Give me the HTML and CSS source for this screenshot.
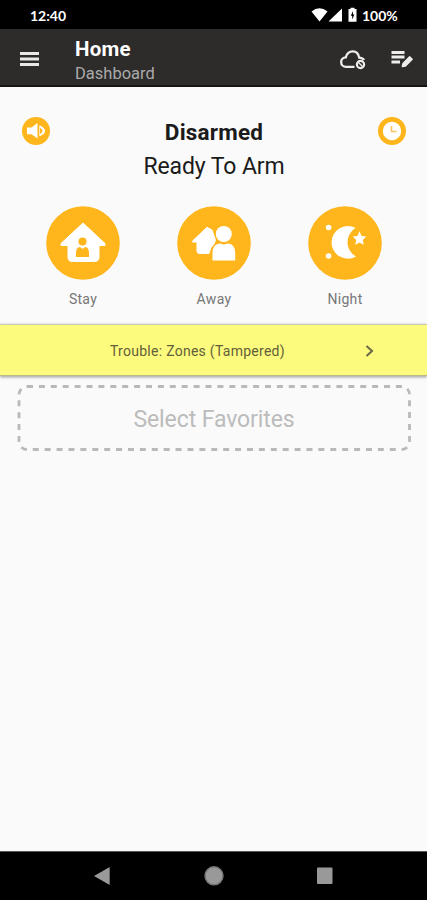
FILE: index.html
```html
<!DOCTYPE html>
<html lang="en">
<head>
    <meta charset="utf-8">
    <meta name="viewport" content="width=device-width, initial-scale=1">
    <title>Home</title>
    <link rel="stylesheet" href="styles.css">
</head>
<body>
    <div class="status-bar">
        <span class="time">12:40</span>
        <div class="status-icons">
            <svg width="52" height="16" viewBox="0 0 52 16" fill="#fff">
                <path d="M0.5 4.5Q8.5-1.8 16.5 4.5L8.5 14.5z"/>
                <path d="M31 1.5V14.5H17.5z"/>
                <path d="M39.5 2H37.5V14.8H45.5V2H43.5V0.8H39.5z"/>
                <path d="M42 4L39.8 8.8H41.2V12.5L43.4 7.6H42z" fill="#000"/>
            </svg>
            <span class="battery">100%</span>
        </div>
    </div>

    <header class="header">
        <svg class="menu" width="20" height="16" viewBox="0 0 20 16" stroke="#e8e8e8" stroke-width="2.8">
            <path d="M0 2.5H19M0 8H19M0 13.5H19"/>
        </svg>
        <div class="titles">
            <h1>Home</h1>
            <p>Dashboard</p>
        </div>
        <svg class="cloud" width="26" height="20" viewBox="0 0 26 20" fill="none" stroke="#eee" stroke-width="2.3">
            <path d="M14.5 16.8H6A4.7 4.7 0 0 1 5.8 7.3C8-0.4 17.6-0.8 19.2 7.6C21.5 7.8 23.2 8.6 24 10"/>
            <circle cx="20.5" cy="14.5" r="3.6" stroke-width="2.2"/>
            <path d="M18.3 12.3L22.7 16.7" stroke-width="1.4"/>
        </svg>
        <svg class="edit" width="23" height="18" viewBox="0 0 23 18" fill="none" stroke="#eee">
            <path d="M0.5 2.5H13.5M0.5 7H13.5M0.5 12H9" stroke-width="2.8"/>
            <path d="M11.3 16.5L12 13.4L18.6 6.8L21.2 9.3L14.5 16z" fill="#eee" stroke-width="1.3" stroke-linejoin="round"/>
        </svg>
    </header>

    <main>
        <section class="state">
            <svg class="round-icon" width="28" height="28" viewBox="0 0 28 28">
                <circle cx="14" cy="14" r="14" fill="#ffb61c"/>
                <path d="M5 10.5H9.5L15.5 6V21.5L9.5 17.3H5z" fill="#fff"/>
                <path d="M17.3 8.3Q23 10.5 23 14T17.3 19.3z" fill="#fff"/>
                <path d="M18 10.8Q20.5 12 20.5 14T18 17" fill="#ffb61c"/>
            </svg>
            <div class="state-text">
                <h2>Disarmed</h2>
                <p>Ready To Arm</p>
            </div>
            <svg class="round-icon" width="28" height="28" viewBox="0 0 28 28" fill="none">
                <circle cx="14" cy="14" r="11.6" fill="#fff" stroke="#ffb61c" stroke-width="4.8"/>
                <path d="M13.5 9V14.5H18.5" stroke="#fcc261" stroke-width="1.6"/>
            </svg>
        </section>

        <section class="modes">
            <button class="mode">
                <svg width="74" height="74" viewBox="0 0 74 74">
                    <circle cx="37" cy="37" r="36.8" fill="#ffb61c"/>
                    <path d="M37 17L59 37.5V39.5H53V51Q53 55.5 48.5 55.5H26Q22 55.5 22 51V39.5H15V37.5z" fill="#fff" stroke="#fff" stroke-width="1" stroke-linejoin="round"/>
                    <circle cx="36.5" cy="35.5" r="4" fill="#ffb61c"/>
                    <path d="M30 51V47Q30 41 34 41L36.5 43L39 41Q43 41 43 47V51z" fill="#ffb61c"/>
                </svg>
                <span>Stay</span>
            </button>
            <button class="mode">
                <svg width="74" height="74" viewBox="0 0 74 74">
                    <circle cx="37" cy="37" r="36.8" fill="#ffb61c"/>
                    <path d="M15.5 35L30 21.3L35 24L38.5 34L37 38Q33 41 32 47.5H22Q20 47.5 20 45V36H15.5z" fill="#fff" stroke="#fff" stroke-width="1" stroke-linejoin="round"/>
                    <circle cx="46.8" cy="28" r="9.2" fill="#ffb61c"/>
                    <circle cx="46.8" cy="28" r="8" fill="#fff"/>
                    <path d="M35.5 54.5V47Q35.5 38 43 37.5L46.8 38.5L51 37.5Q58.2 38 58.2 47V54.5z" fill="#fff"/>
                </svg>
                <span>Away</span>
            </button>
            <button class="mode">
                <svg width="74" height="74" viewBox="0 0 74 74" fill="#fff">
                    <circle cx="37" cy="37" r="36.8" fill="#ffb61c"/>
                    <path d="M47.5 22A16.3 16.3 0 1 0 48 50.5A16.5 16.5 0 0 1 47.5 22z"/>
                    <path d="M51.5 25.3L53.5 29.9L58.3 30.6L54.8 34L55.7 38.8L51.5 36.5L47.3 38.8L48.2 34L44.7 30.6L49.5 29.9z"/>
                    <circle cx="20.6" cy="21.5" r="2.8"/>
                    <circle cx="20.6" cy="50" r="2.8"/>
                </svg>
                <span>Night</span>
            </button>
        </section>

        <section class="trouble">
            <span class="trouble-text">Trouble: Zones (Tampered)</span>
            <svg width="9" height="12" viewBox="0 0 9 12" fill="none" stroke="#6b684a" stroke-width="2">
                <path d="M1.5 1L7 6L1.5 11"/>
            </svg>
        </section>

        <section class="favorites">
            <svg class="outline" width="394" height="67" viewBox="0 0 394 67" fill="none">
                <rect x="2" y="2.5" width="390.5" height="63" rx="8" stroke="#b9b9b9" stroke-width="2.8" stroke-dasharray="6 5.9"/>
            </svg>
            <span>Select Favorites</span>
        </section>
    </main>

    <nav class="nav-bar">
        <svg width="427" height="49" viewBox="0 0 427 49" fill="#999">
            <path d="M94 24L109.7 15V33z"/>
            <circle cx="214" cy="23.8" r="9" stroke="#777" stroke-width="1.4"/>
            <rect x="317" y="15.5" width="15.5" height="16.5" rx="1"/>
        </svg>
    </nav>
</body>
</html>
```
FILE: styles.css
```css
* {
    box-sizing: border-box;
}

body {
    margin: 0;
    width: 427px;
    height: 900px;
    display: flex;
    flex-direction: column;
    background-color: #fafafa;
    font-family: Roboto, sans-serif;
    overflow: hidden;
}

h1, h2, p {
    margin: 0;
}

svg {
    display: block;
    flex-shrink: 0;
}

.status-bar {
    height: 29px;
    padding: 1px 29px 0 30px;
    display: flex;
    align-items: center;
    justify-content: space-between;
    background-color: #000;
    color: #fff;
    font-family: Lato, sans-serif;
    font-size: 14px;
    font-weight: bold;
}

.status-icons {
    display: flex;
    align-items: center;
}

.battery {
    width: 36px;
    margin-left: -1px;
    white-space: nowrap;
}

.header {
    height: 58px;
    padding: 0 13px 0 20px;
    display: flex;
    align-items: center;
    background-color: #2d2c2b;
    border-bottom: 2px solid #151515;
}

.menu {
    margin-top: 3px;
}

.titles {
    flex: 1;
    margin-left: 35px;
    padding-top: 9px;
}

.titles h1 {
    color: #fff;
    font-size: 20.5px;
    font-weight: 700;
    line-height: 24px;
    letter-spacing: 0.2px;
}

.titles p {
    color: #aaa;
    font-size: 16.5px;
    line-height: 25px;
}

.cloud {
    margin: 5px 25px 0 0;
}

.edit {
    margin-top: 4px;
}

main {
    flex: 1;
}

.state {
    height: 119px;
    padding: 30px 21px 0 22px;
    display: flex;
    justify-content: space-between;
    align-items: flex-start;
}

.state-text {
    text-align: center;
    color: #1b1b1b;
}

.state-text h2 {
    font-size: 22.5px;
    font-weight: 700;
    line-height: 30px;
    letter-spacing: 0.2px;
}

.state-text p {
    font-size: 23px;
    line-height: 40px;
    letter-spacing: -0.1px;
}

.modes {
    height: 118px;
    padding: 0 45px 0 46px;
    display: flex;
    justify-content: space-between;
}

.mode {
    width: 74px;
    padding: 0;
    display: flex;
    flex-direction: column;
    align-items: center;
    border: none;
    background: none;
    color: #777;
    font-family: inherit;
    font-size: 14px;
    letter-spacing: 0.3px;
    line-height: 18px;
}

.mode span {
    margin-top: 10px;
}

.trouble {
    height: 52px;
    padding: 1px 53px 0 110px;
    display: flex;
    align-items: center;
    justify-content: space-between;
    background-color: #fdfb7d;
    border-top: 1px solid #c9c9b4;
    border-bottom: 1px solid #b9b78c;
    box-shadow: 0 1px 3px rgba(0, 0, 0, 0.4);
    color: #62603a;
    font-size: 14px;
    letter-spacing: 0.27px;
}

.favorites {
    margin: 8px 16px 0 17px;
    display: grid;
    place-items: center;
    color: #bcbcbc;
    font-size: 23px;
    letter-spacing: -0.1px;
}

.favorites > * {
    grid-area: 1 / 1;
}

.favorites span {
    padding-top: 3px;
}

.nav-bar {
    height: 49px;
    background-color: #000;
    border-top: 1px solid #555;
}
```
